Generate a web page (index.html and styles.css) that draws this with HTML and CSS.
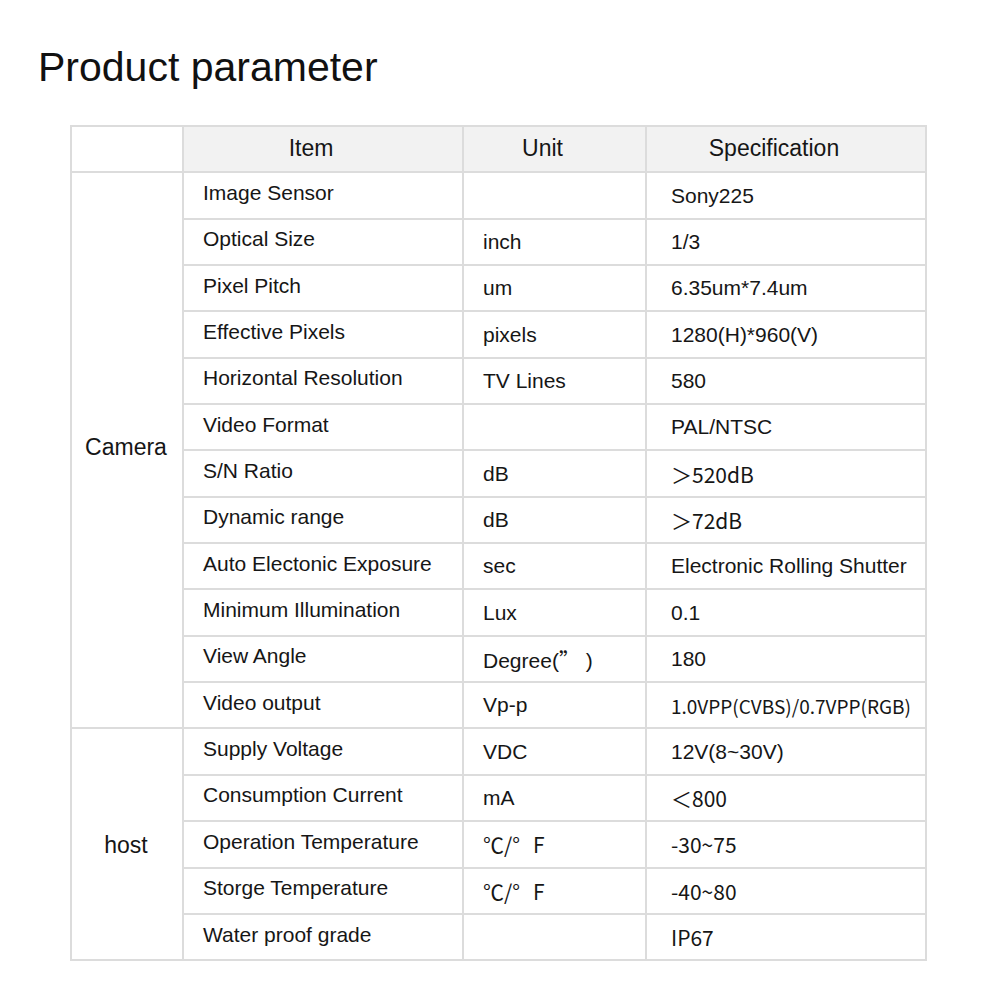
FILE: index.html
```html
<!DOCTYPE html>
<html lang="en">
<head>
<meta charset="utf-8">
<title>Product parameter</title>
<link rel="stylesheet" href="styles.css">
</head>
<body>
<h1 class="title">Product parameter</h1>
<table class="params">
  <colgroup>
    <col class="c-cat"><col class="c-item"><col class="c-unit"><col class="c-spec">
  </colgroup>
  <tbody>
    <tr class="head">
      <td class="blank"></td>
      <td class="th">Item</td>
      <td class="th">Unit</td>
      <td class="th">Specification</td>
    </tr>
    <tr><td class="cat" rowspan="12">Camera</td><td class="item">Image Sensor</td><td class="unit"></td><td class="spec">Sony225</td></tr>
    <tr><td class="item">Optical Size</td><td class="unit">inch</td><td class="spec">1/3</td></tr>
    <tr><td class="item">Pixel Pitch</td><td class="unit">um</td><td class="spec">6.35um*7.4um</td></tr>
    <tr><td class="item">Effective Pixels</td><td class="unit">pixels</td><td class="spec">1280(H)*960(V)</td></tr>
    <tr><td class="item">Horizontal Resolution</td><td class="unit">TV Lines</td><td class="spec">580</td></tr>
    <tr><td class="item">Video Format</td><td class="unit"></td><td class="spec">PAL/NTSC</td></tr>
    <tr><td class="item">S/N Ratio</td><td class="unit">dB</td><td class="spec cjk">＞520dB</td></tr>
    <tr><td class="item">Dynamic range</td><td class="unit">dB</td><td class="spec cjk">＞72dB</td></tr>
    <tr><td class="item">Auto Electonic Exposure</td><td class="unit">sec</td><td class="spec">Electronic Rolling Shutter</td></tr>
    <tr><td class="item">Minimum Illumination</td><td class="unit">Lux</td><td class="spec">0.1</td></tr>
    <tr><td class="item">View Angle</td><td class="unit">Degree(<span class="cjk">”</span>&nbsp;)</td><td class="spec">180</td></tr>
    <tr><td class="item">Video output</td><td class="unit">Vp-p</td><td class="spec cjk small">1.0VPP(CVBS)/0.7VPP(RGB)</td></tr>
    <tr><td class="cat host" rowspan="5">host</td><td class="item">Supply Voltage</td><td class="unit">VDC</td><td class="spec">12V(8~30V)</td></tr>
    <tr><td class="item">Consumption Current</td><td class="unit">mA</td><td class="spec cjk">＜800</td></tr>
    <tr><td class="item">Operation Temperature</td><td class="unit cjk">℃/°<span class="gap"></span>F</td><td class="spec cjk">-30~75</td></tr>
    <tr><td class="item">Storge Temperature</td><td class="unit cjk">℃/°<span class="gap"></span>F</td><td class="spec cjk">-40~80</td></tr>
    <tr><td class="item">Water proof grade</td><td class="unit"></td><td class="spec cjk">IP67</td></tr>
  </tbody>
</table>
</body>
</html>
```
FILE: styles.css
```css
html, body {
  margin: 0;
  padding: 0;
  background: #ffffff;
}

body {
  font-family: "Liberation Sans", Arial, sans-serif;
  color: #161616;
}

.title {
  margin: 44px 0 0 38px;
  font-size: 41px;
  font-weight: normal;
  line-height: 46px;
  color: #111;
}

.params {
  margin: 35px 0 0 70px;
  border-collapse: collapse;
  table-layout: fixed;
  width: 856px;
  font-size: 21px;
}

.c-cat { width: 112px; }
.c-item { width: 280px; }
.c-unit { width: 183px; }
.c-spec { width: 280px; }

.params td {
  border: 2px solid #dcdcdc;
  height: 46.35px;
  padding: 0;
  vertical-align: middle;
  white-space: nowrap;
  box-sizing: border-box;
}

.head td {
  background: #f2f2f2;
}

.head td.blank {
  background: #ffffff;
  border-bottom-color: #ffffff;
  border-bottom-width: 0;
}

.th {
  font-size: 23px;
  text-align: center;
  padding-right: 24px !important;
  padding-bottom: 2px !important;
}

.cat {
  font-size: 23px;
  text-align: center;
  padding-right: 2px !important;
  padding-bottom: 6px !important;
}

.cat.host {
  padding-bottom: 0 !important;
  padding-top: 2px !important;
}

.item {
  padding-left: 19px !important;
  padding-bottom: 5px !important;
}

.unit {
  padding-left: 19px !important;
}

.spec {
  padding-left: 24px !important;
}

.cjk {
  font-family: "Noto Sans CJK SC", "Liberation Sans", sans-serif;
}

.gap {
  display: inline-block;
  width: 13px;
}

.small {
  font-size: 19px;
}
```
